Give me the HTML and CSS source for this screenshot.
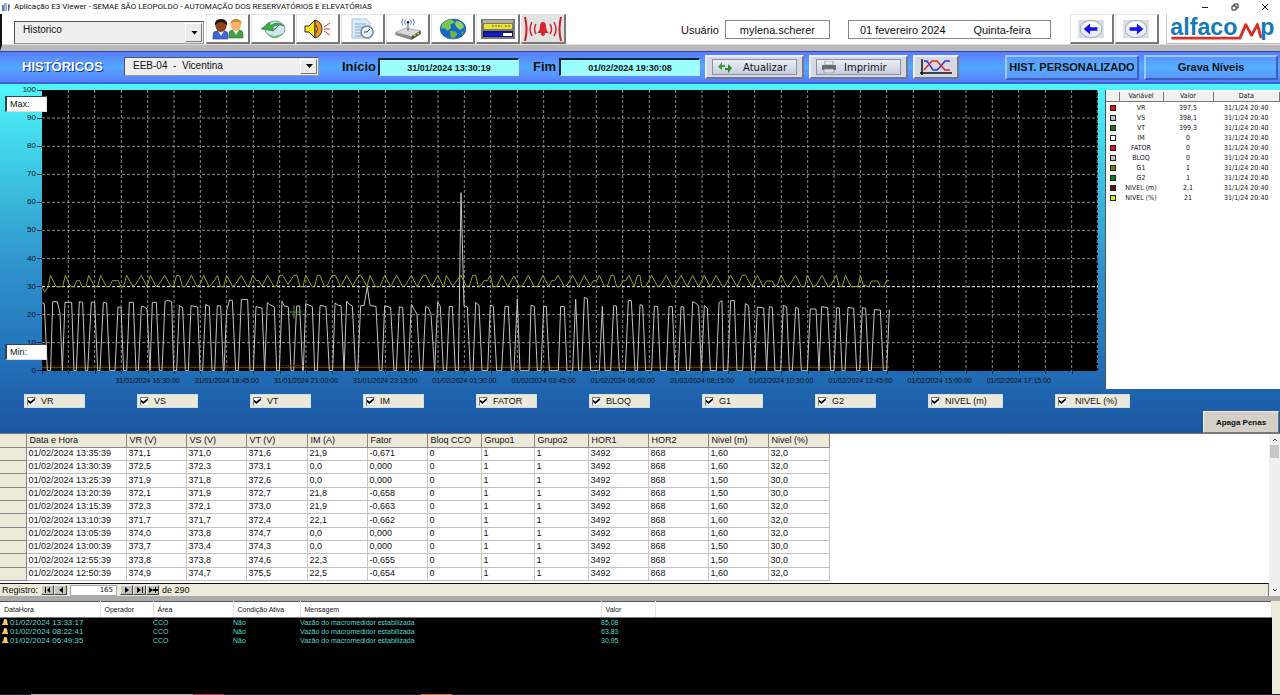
FILE: index.html
```html
<!DOCTYPE html>
<html lang="pt-BR">
<head>
<meta charset="utf-8">
<title>Aplicação E3 Viewer</title>
<link rel="stylesheet" href="styles.css">
</head>
<body>
<header class="titlebar">
  <svg class="app-icon" viewBox="0 0 10 10"><path d="M1 3h5v6H1z" fill="#5a7fb0"/><path d="M3 1h3v8H3z" fill="#9bb6d8"/><path d="M7 2l2 1-1 6H7z" fill="#3f6aa5"/></svg>
  <h1 class="title">Aplicação E3 Viewer - SEMAE SÃO LEOPOLDO - AUTOMAÇÃO DOS RESERVATÓRIOS E ELEVATÓRIAS</h1>
  <button class="win" aria-label="Minimizar"><svg viewBox="0 0 8 8"><path d="M1 4.500h6" /></svg></button>
  <button class="win" aria-label="Restaurar"><svg viewBox="0 0 8 8"><path d="M1 3h4v4H1zM3 3V1h4v4H5"/></svg></button>
  <button class="win" aria-label="Fechar"><svg viewBox="0 0 8 8"><path d="M1 1l6 6M7 1L1 7"/></svg></button>
</header>

<nav class="toolbar">
  <div class="drop screen-drop"><select aria-label="Tela"><option>Historico</option></select></div>
  <div class="tools">
    <button class="tool" aria-label="Usuários"><svg viewBox="0 0 32 22"><path d="M17 20v-4q0-4 4-4h6q4 0 4 4v4z" fill="#43a047" stroke="#1e6b25" stroke-width=".6"/><path d="M21 12l3 5 3-5z" fill="#e8f5e9"/><ellipse cx="24" cy="7" rx="5" ry="6" fill="#f6b26b"/><path d="M18.500 7Q18 1 24 1q6 0 5.500 6Q28 3 24 4q-4-1-5.500 3z" fill="#c98a2b"/><path d="M1 21v-4q0-4 4-4h7q4 0 4 4v4z" fill="#3f66d8" stroke="#223c9c" stroke-width=".6"/><path d="M6 13l3 5 3-5z" fill="#e3ebff"/><ellipse cx="9" cy="8" rx="5.500" ry="6" fill="#8a4418"/><path d="M3 8q-1-7 6-7 7 0 6 7-2-4-6-4-4 0-6 4z" fill="#1d120c"/></svg></button>
    <button class="tool" aria-label="Históricos"><svg viewBox="0 0 32 22"><ellipse cx="18" cy="11" rx="10" ry="8" fill="#d3e6ee" stroke="#7fa0a8"/><path d="M18 11l5-5M18 11h-4" stroke="#456" fill="none"/><path d="M4 11l9-7v4q7-6 14 0-7-3-12 2l2 3z" fill="#3fae49" stroke="#237a2d" stroke-width=".6"/><path d="M10 15q7 6 16 0-4 6-9 5-5 0-7-5z" fill="#63bf68"/></svg></button>
    <button class="tool" aria-label="Sirene"><svg viewBox="0 0 32 22"><path d="M3 8h4l6-6v18l-6-6H3z" fill="#ffe21a" stroke="#222" stroke-width="1"/><path d="M13 2q7 2 7 9t-7 9z" fill="#f39a1f" stroke="#333"/><path d="M14 7q3 4 0 8" stroke="#333" fill="#ffd54a"/><path d="M22 9l6-4M22 11h6M22 13l6 4" stroke="#d33" fill="none"/></svg></button>
    <button class="tool" aria-label="Relatórios"><svg viewBox="0 0 32 22"><path d="M5 1h14l4 4v15H5z" fill="#dcebf8" stroke="#a5c3dd"/><path d="M8 6h11M8 9h11M8 12h7M8 15h6M8 18h6" stroke="#7ba9d0"/><circle cx="20" cy="14" r="6" fill="#e8f0f5" stroke="#6d8797" stroke-width="1.500"/><path d="M20 14l3-3M20 14h-3" stroke="#345"/></svg></button>
    <button class="tool" aria-label="Comunicação"><svg viewBox="0 0 32 26"><path d="M1 17l12-5 18 3-11 7z" fill="#d9d9d9" stroke="#777" stroke-width=".6"/><path d="M1 17v3l19 6v-4z" fill="#888"/><path d="M20 22l11-7v4l-11 7z" fill="#444"/><path d="M23 21l2-1M27 19l2-1" stroke="#f3d22a" stroke-width="2"/><path d="M16 15V6" stroke="#222"/><circle cx="16" cy="5" r="1.500" fill="#222"/><path d="M13 2q-2 3 0 6M19 2q2 3 0 6M10 1q-3 4 0 8M22 1q3 4 0 8" stroke="#4a58d0" fill="none"/></svg></button>
    <button class="tool" aria-label="Rede"><svg viewBox="0 0 32 24"><ellipse cx="16" cy="12" rx="14" ry="11" fill="#1767c9" stroke="#0f4690" stroke-width=".6"/><path d="M4 7Q8 1 15 2l3 3-5 2 1 4-4 3-3-3-4 1z" fill="#7cc94c"/><path d="M20 3q7 1 8 7l-4 3-4-3-2-4z" fill="#8ed35b"/><path d="M13 14l6 1 2 3-5 5q-4-3-3-9z" fill="#67b83d"/><path d="M25 16l3-2-2 5z" fill="#67b83d"/></svg></button>
    <button class="tool panel" aria-label="Painel"><svg viewBox="0 0 34 20"><path d="M0 0h34v20H0z" fill="#7a7a72"/><path d="M2 1h30v3H2z" fill="#b1b1a8"/><path d="M3 5h28v5H3z" fill="#ece42c"/><path d="M11 7h10M24 7h6" stroke="#665" stroke-dasharray="2 1"/><path d="M2 12h30v6H2z" fill="#161678"/><path d="M22 14h9v3h-9z" fill="#fff"/><path d="M4 14h17v3H4z" fill="#1420d8"/></svg></button>
    <button class="tool alarm" aria-label="Alarmes"><svg viewBox="0 0 38 24"><path d="M1 0q3 12 0 24M37 0q-3 12 0 24" stroke="#c91f25" stroke-width="2" fill="none"/><path d="M8 5q-4 7 0 14M12 7q-3 5 0 10M30 5q4 7 0 14M26 7q3 5 0 10" stroke="#cf2a2f" stroke-width="1.500" fill="none"/><path d="M13 16q3-2 3-7 0-4 3-4t3 4q0 5 3 7z" fill="#d8262c"/><circle cx="19" cy="17" r="2" fill="#d8262c"/></svg></button>
  </div>
  <label class="user-label" for="user">Usuário</label>
  <input class="field user" id="user" value="mylena.scherer" readonly>
  <div class="field today"><span>01 fevereiro 2024</span><span>Quinta-feira</span></div>
  <div class="tools steps">
    <button class="tool" aria-label="Anterior"><svg viewBox="0 0 28 22"><path d="M0 1h28v20H0z" fill="#d9dde3"/><ellipse cx="14" cy="11" rx="12" ry="9.500" fill="#e9eff8" stroke="#9aa6b5"/><ellipse cx="14" cy="7" rx="8" ry="4" fill="#fff"/><path d="M6 11l7-6v4h8v4h-8v4z" fill="#1212ee"/></svg></button>
    <button class="tool" aria-label="Próximo"><svg viewBox="0 0 28 22"><path d="M0 1h28v20H0z" fill="#d9dde3"/><ellipse cx="14" cy="11" rx="12" ry="9.500" fill="#e9eff8" stroke="#9aa6b5"/><ellipse cx="14" cy="7" rx="8" ry="4" fill="#fff"/><path d="M22 11l-7-6v4H7v4h8v4z" fill="#1212ee"/></svg></button>
  </div>
  <div class="logo"><svg viewBox="0 0 112 30" aria-label="alfacomp"><path d="M2 25h71l6-14 6 11 6-11 4 14" class="logo-m"/><text x="1" y="22" class="logo-text">alfaco</text><text x="94" y="22" class="logo-text">p</text></svg></div>
</nav>

<section class="filterbar">
  <h2 class="heading">HISTÓRICOS</h2>
  <div class="drop station"><select aria-label="Estação"><option>EEB-04&nbsp; -&nbsp; Vicentina</option></select></div>
  <label class="range" for="start">Início</label><input class="when" id="start" value="31/01/2024 13:30:19">
  <label class="range end" for="end">Fim</label><input class="when" id="end" value="01/02/2024 19:30:08">
  <button class="bevel action"><span><svg viewBox="0 0 16 12"><path d="M1 6l4-5v3h3v2H5v3z" fill="#3d9b35"/><path d="M15 7l-4 5V9H8V7h3V3z" fill="#2f8428"/></svg>Atualizar</span></button>
  <button class="bevel action"><span><svg viewBox="0 0 16 12"><path d="M4 0h8v4H4z" fill="#eee" stroke="#777" stroke-width=".6"/><path d="M1 4h14v5H1z" fill="#666c75"/><path d="M3 8h10v4H3z" fill="#ddd" stroke="#777" stroke-width=".6"/></svg>Imprimir</span></button>
  <button class="bevel pens" aria-label="Gráfico"><svg viewBox="0 0 32 18"><path d="M2 1v16M0 15h32" stroke="#111" fill="none" stroke-width="1.500"/><path d="M4 3h3l6 9h4l4-4 4-5h5" stroke="#2738d8" fill="none" stroke-width="1.500"/><path d="M4 12l8-9h5l8 9h5" stroke="#e02a2a" fill="none" stroke-width="1.500"/></svg></button>
  <button class="glass first">HIST. PERSONALIZADO</button>
  <button class="glass">Grava Níveis</button>
</section>

<main class="trend">
  <div class="trend-row">
    <ul class="y-axis"><li>100</li><li>90</li><li>80</li><li>70</li><li>60</li><li>50</li><li>40</li><li>30</li><li>20</li><li>10</li><li>0</li></ul>
    <div class="plot-col">
      <svg class="plot" viewBox="0 0 3168 843" preserveAspectRatio="none">
        <path class="grid" d="M0 84H3168M0 169H3168M0 253H3168M0 337H3168M0 421H3168M0 506H3168M0 674H3168M0 758H3168"/>
        <path class="grid" d="M79 0v843M158 0v843M238 0v843M317 0v843M396 0v843M475 0v843M554 0v843M634 0v843M713 0v843M792 0v843M871 0v843M950 0v843M1030 0v843M1109 0v843M1188 0v843M1267 0v843M1346 0v843M1426 0v843M1505 0v843M1584 0v843M1663 0v843M1742 0v843M1822 0v843M1901 0v843M1980 0v843M2059 0v843M2138 0v843M2218 0v843M2297 0v843M2376 0v843M2455 0v843M2534 0v843M2614 0v843M2693 0v843M2772 0v843M2851 0v843M2930 0v843M3010 0v843M3089 0v843M3166 0v843"/>
        <path class="grid strong" d="M0 590H3168"/>
        <path class="pen maroon" d="M0 828H2542"/>
        <path class="pen olive" d="M0 833H2542"/>
        <g transform="translate(-126 -29)">
          <polyline class="pen current" points="126,667 133,670 142,871 152,871 158,664 172,664 180,700 187,871 195,666 215,666 222,871 229,871 238,664 248,666 256,871 263,871 274,665 284,666 293,871 300,871 310,666 320,668 329,871 345,871 354,680 363,681 371,871 380,871 388,666 400,666 408,871 415,871 424,678 433,680 441,686 450,871 457,666 469,666 478,871 486,871 495,663 506,660 515,664 521,871 530,871 538,676 548,682 556,871 565,871 573,676 593,680 600,871 608,871 617,673 628,678 636,871 644,871 652,676 662,677 670,871 672,871 680,690 689,659 697,660 707,871 715,871 724,657 743,658 750,871 760,871 768,679 786,683 794,871 802,667 808,672 823,680 830,871 838,871 846,662 852,676 865,680 873,871 881,871 890,677 899,677 908,871 910,871 917,670 937,679 944,871 952,871 960,676"/>
          <polyline class="pen level" points="126,619 134,635 145,619 151,585 168,619 188,619 196,585 207,610 212,619 222,619 230,601 239,601 246,619 258,619 266,585 284,619 293,619 302,585 319,619 328,619 337,601 355,601 363,619 371,619 380,585 398,617 407,612 424,585 441,619 451,585 468,619 477,612 494,585 513,619 521,617 530,585 539,587 547,619 556,619 574,585 591,619 600,612 611,585 627,619 635,612 653,585 661,619 671,619 680,585 698,619 706,612 724,585 742,619 750,610 758,585 768,600 777,601 786,617 803,585 822,619 830,617 838,585 848,585 864,612 882,585 891,585 900,619 909,619 917,585 936,619 944,617 952,585 960,585"/>
          <path class="pen cross" d="M862 695h42M882 675v40"/>
          <path class="pen mark" d="M862 856h48"/>
        </g>
        <g transform="translate(834 241)">
          <polyline class="pen current" points="0,405 18,409 28,601 38,601 45,398 55,405 63,406 72,601 80,392 88,402 97,407 107,601 113,601 122,406 132,406 142,349 150,406 168,408 178,601 186,601 194,406 212,412 222,601 229,601 238,409 248,412 257,601 265,601 274,402 291,432 300,601 308,601 317,409 325,412 333,432 344,601 353,396 361,408 370,601 380,601 388,408 397,409 406,601 415,601 423,67 432,406 442,410 451,601 459,601 467,397 477,405 486,601 503,601 511,404 520,408 530,601 545,601 555,408 565,408 574,601 582,601 592,386 600,601 627,601 633,405 643,408 652,601 663,601 671,408 679,408 688,601 715,601 722,408 733,409 741,601 758,601 767,386 776,601 785,601 793,381 802,385 812,601 838,601 847,408 855,601 872,601 881,406 889,407 898,601 916,601 925,390 934,391 945,601 952,601 960,403"/>
          <polyline class="pen level" points="0,315 14,349 22,345 36,315 46,315 62,349 80,315 98,347 116,315 123,315 141,349 150,315 166,349 180,349 194,315 212,349 230,315 248,349 256,345 274,315 291,349 309,315 318,315 335,349 353,315 371,349 379,315 398,347 423,315 440,349 449,345 458,315 467,315 475,349 484,345 492,331 502,331 511,315 519,349 530,349 546,315 563,349 582,317 599,349 608,345 625,315 643,349 652,349 669,315 686,349 695,331 704,331 714,315 733,349 741,345 758,315 776,349 793,315 811,347 820,331 829,331 838,315 854,349 863,345 873,315 881,315 890,349 900,349 908,331 917,331 927,315 943,349 952,315 960,315"/>
        </g>
        <g transform="translate(1794 511)">
          <polyline class="pen current" points="0,133 8,136 17,331 35,331 43,138 53,138 61,331 79,331 87,139 97,139 105,331 115,331 123,139 131,140 140,331 149,331 158,124 167,128 176,137 184,331 193,136 202,143 211,331 229,331 237,127 246,121 250,331 263,331 272,121 283,121 291,331 308,331 316,130 326,136 335,331 344,331 352,140 371,143 380,331 388,139 397,141 405,331 422,331 430,135 440,140 448,331 457,331 467,141 475,144 484,331 502,331 511,146 528,146 537,331 545,139 563,142 572,331 582,331 590,142 598,143 606,331 615,331 624,141 641,144 650,331 659,331 667,142 677,144 686,331 694,331 703,148 721,149 730,331 740,331 748,148"/>
          <polyline class="pen level" points="0,45 5,79 17,79 35,45 53,79 61,76 79,45 97,79 105,76 123,45 141,79 158,45 176,79 193,45 211,79 228,45 248,79 255,76 272,45 291,79 307,45 317,45 335,79 352,45 370,79 379,62 397,62 406,79 414,70 423,45 441,79 450,72 467,45 484,79 494,79 502,45 520,79 528,76 546,45 564,79 572,76 589,45 598,79 607,79 616,45 633,79 654,79 661,45 670,75 686,79 695,62 713,62 722,79 731,79 740,61 748,61"/>
        </g>
      </svg>
      <div class="ticks"></div>
      <ol class="x-axis"><li>31/01/2024 16:30:00</li><li>31/01/2024 18:45:00</li><li>31/01/2024 21:00:00</li><li>31/01/2024 23:15:00</li><li>01/02/2024 01:30:00</li><li>01/02/2024 03:45:00</li><li>01/02/2024 06:00:00</li><li>01/02/2024 08:15:00</li><li>01/02/2024 10:30:00</li><li>01/02/2024 12:45:00</li><li>01/02/2024 15:00:00</li><li>01/02/2024 17:15:00</li></ol>
    </div>
    <input class="limit max" value="Max:" aria-label="Máximo">
    <input class="limit min" value="Min:" aria-label="Mínimo">
    <div class="legend">
      <table>
        <thead><tr><th class="c-pen"></th><th class="c-var">Variável</th><th class="c-val">Valor</th><th>Data</th></tr></thead>
        <tbody>
          <tr><td><i class="sw red"></i></td><td>VR</td><td>397,5</td><td>31/1/24 20:40</td></tr>
          <tr><td><i class="sw silver"></i></td><td>VS</td><td>398,1</td><td>31/1/24 20:40</td></tr>
          <tr><td><i class="sw green"></i></td><td>VT</td><td>399,3</td><td>31/1/24 20:40</td></tr>
          <tr><td><i class="sw white"></i></td><td>IM</td><td>0</td><td>31/1/24 20:40</td></tr>
          <tr><td><i class="sw red"></i></td><td>FATOR</td><td>0</td><td>31/1/24 20:40</td></tr>
          <tr><td><i class="sw silver"></i></td><td>BLOQ</td><td>0</td><td>31/1/24 20:40</td></tr>
          <tr><td><i class="sw olive"></i></td><td>G1</td><td>1</td><td>31/1/24 20:40</td></tr>
          <tr><td><i class="sw green"></i></td><td>G2</td><td>1</td><td>31/1/24 20:40</td></tr>
          <tr><td><i class="sw maroon"></i></td><td>NIVEL (m)</td><td>2,1</td><td>31/1/24 20:40</td></tr>
          <tr><td><i class="sw lime"></i></td><td>NIVEL (%)</td><td>21</td><td>31/1/24 20:40</td></tr>
        </tbody>
      </table>
    </div>
  </div>
  <div class="checks">
    <label><input type="checkbox" checked>VR</label>
    <label><input type="checkbox" checked>VS</label>
    <label><input type="checkbox" checked>VT</label>
    <label><input type="checkbox" checked>IM</label>
    <label><input type="checkbox" checked>FATOR</label>
    <label><input type="checkbox" checked>BLOQ</label>
    <label><input type="checkbox" checked>G1</label>
    <label><input type="checkbox" checked>G2</label>
    <label class="wide"><input type="checkbox" checked>NIVEL (m)</label>
    <label class="wide last"><input type="checkbox" checked>NIVEL (%)</label>
  </div>
  <button class="clear">Apaga Penas</button>
</main>

<section class="records">
  <div class="records-main">
    <div class="sheet">
      <table>
        <colgroup><col class="w-sel"><col class="w-date"><col class="w-60"><col class="w-60"><col class="w-61"><col class="w-60"><col class="w-60"><col class="w-54"><col class="w-53"><col class="w-54"><col class="w-60"><col class="w-60"><col class="w-60"><col class="w-61"></colgroup>
        <thead><tr><th></th><th>Data e Hora</th><th>VR (V)</th><th>VS (V)</th><th>VT (V)</th><th>IM (A)</th><th>Fator</th><th>Bloq CCO</th><th>Grupo1</th><th>Grupo2</th><th>HOR1</th><th>HOR2</th><th>Nivel (m)</th><th>Nivel (%)</th></tr></thead>
        <tbody>
          <tr><th></th><td>01/02/2024 13:35:39</td><td>371,1</td><td>371,0</td><td>371,6</td><td>21,9</td><td>-0,671</td><td>0</td><td>1</td><td>1</td><td>3492</td><td>868</td><td>1,60</td><td>32,0</td></tr>
          <tr><th></th><td>01/02/2024 13:30:39</td><td>372,5</td><td>372,3</td><td>373,1</td><td>0,0</td><td>0,000</td><td>0</td><td>1</td><td>1</td><td>3492</td><td>868</td><td>1,60</td><td>32,0</td></tr>
          <tr><th></th><td>01/02/2024 13:25:39</td><td>371,9</td><td>371,8</td><td>372,6</td><td>0,0</td><td>0,000</td><td>0</td><td>1</td><td>1</td><td>3492</td><td>868</td><td>1,50</td><td>30,0</td></tr>
          <tr><th></th><td>01/02/2024 13:20:39</td><td>372,1</td><td>371,9</td><td>372,7</td><td>21,8</td><td>-0,658</td><td>0</td><td>1</td><td>1</td><td>3492</td><td>868</td><td>1,50</td><td>30,0</td></tr>
          <tr><th></th><td>01/02/2024 13:15:39</td><td>372,3</td><td>372,1</td><td>373,0</td><td>21,9</td><td>-0,663</td><td>0</td><td>1</td><td>1</td><td>3492</td><td>868</td><td>1,60</td><td>32,0</td></tr>
          <tr><th></th><td>01/02/2024 13:10:39</td><td>371,7</td><td>371,7</td><td>372,4</td><td>22,1</td><td>-0,662</td><td>0</td><td>1</td><td>1</td><td>3492</td><td>868</td><td>1,60</td><td>32,0</td></tr>
          <tr><th></th><td>01/02/2024 13:05:39</td><td>374,0</td><td>373,8</td><td>374,7</td><td>0,0</td><td>0,000</td><td>0</td><td>1</td><td>1</td><td>3492</td><td>868</td><td>1,60</td><td>32,0</td></tr>
          <tr><th></th><td>01/02/2024 13:00:39</td><td>373,7</td><td>373,4</td><td>374,3</td><td>0,0</td><td>0,000</td><td>0</td><td>1</td><td>1</td><td>3492</td><td>868</td><td>1,50</td><td>30,0</td></tr>
          <tr><th></th><td>01/02/2024 12:55:39</td><td>373,8</td><td>373,8</td><td>374,6</td><td>22,3</td><td>-0,655</td><td>0</td><td>1</td><td>1</td><td>3492</td><td>868</td><td>1,50</td><td>30,0</td></tr>
          <tr><th></th><td>01/02/2024 12:50:39</td><td>374,9</td><td>374,7</td><td>375,5</td><td>22,5</td><td>-0,654</td><td>0</td><td>1</td><td>1</td><td>3492</td><td>868</td><td>1,60</td><td>32,0</td></tr>
        </tbody>
      </table>
    </div>
    <div class="pager">
      <label for="rec">Registro:</label>
      <div class="pager-buttons">
        <button aria-label="Primeiro"><svg viewBox="0 0 10 6"><path d="M2 0h1v6H2zM7 0v6L4 3z"/></svg></button>
        <button aria-label="Anterior"><svg viewBox="0 0 10 6"><path d="M7 0v6L3 3z"/></svg></button>
      </div>
      <input id="rec" value="165">
      <div class="pager-buttons">
        <button aria-label="Próximo"><svg viewBox="0 0 10 6"><path d="M3 0v6l4-3z"/></svg></button>
        <button aria-label="Último"><svg viewBox="0 0 10 6"><path d="M2 0v6l4-3zM7 0h1v6H7z"/></svg></button>
        <button aria-label="Novo"><svg viewBox="0 0 10 6"><path d="M1 0v6l4-3zM5 2h5v2H5zM7 0h1v6H7z"/></svg></button>
      </div>
      <span>de 290</span>
    </div>
  </div>
  <div class="scroll"><svg viewBox="0 0 6 4"><path d="M1 3l2-2 2 2"/></svg><i></i><svg viewBox="0 0 6 4"><path d="M1 1l2 2 2-2"/></svg></div>
</section>

<section class="alarms">
  <table>
    <colgroup><col class="a-date"><col class="a-op"><col class="a-area"><col class="a-cond"><col class="a-msg"><col class="a-val"><col></colgroup>
    <thead><tr><th>DataHora</th><th>Operador</th><th>Área</th><th>Condição Ativa</th><th>Mensagem</th><th>Valor</th><th></th></tr></thead>
    <tbody>
      <tr><td><svg class="bell" viewBox="0 0 9 9"><path d="M1 7q2-1 2-4 0-2 2-2t2 2q0 3 1 4v1H1z" fill="#f0c64a"/><path d="M4 2q1-1 1 0v4H4z" fill="#fff3b8"/></svg>01/02/2024 13:33:17</td><td></td><td>CCO</td><td>Não</td><td>Vazão do macromedidor estabilizada</td><td>85,08</td><td></td></tr>
      <tr><td><svg class="bell" viewBox="0 0 9 9"><path d="M1 7q2-1 2-4 0-2 2-2t2 2q0 3 1 4v1H1z" fill="#f0c64a"/><path d="M4 2q1-1 1 0v4H4z" fill="#fff3b8"/></svg>01/02/2024 08:22:41</td><td></td><td>CCO</td><td>Não</td><td>Vazão do macromedidor estabilizada</td><td>63,83</td><td></td></tr>
      <tr><td><svg class="bell" viewBox="0 0 9 9"><path d="M1 7q2-1 2-4 0-2 2-2t2 2q0 3 1 4v1H1z" fill="#f0c64a"/><path d="M4 2q1-1 1 0v4H4z" fill="#fff3b8"/></svg>01/02/2024 06:49:35</td><td></td><td>CCO</td><td>Não</td><td>Vazão do macromedidor estabilizada</td><td>30,95</td><td></td></tr>
    </tbody>
  </table>
</section>
<footer class="taskbar"></footer>
</body>
</html>
```

FILE: styles.css
```css
* { box-sizing: border-box; }
body { margin: 0; min-height: 100vh; display: flex; flex-direction: column; background: #fff; color: #111; font-family: "Liberation Sans", Arial, sans-serif; font-size: 9px; overflow-x: hidden; }
button, input, select { font: inherit; color: inherit; margin: 0; padding: 0; border-radius: 0; }
ul, ol, h1, h2 { margin: 0; padding: 0; list-style: none; }
svg { display: block; }
table { border-collapse: collapse; table-layout: fixed; }
th, td { padding: 0; font-weight: normal; text-align: left; white-space: nowrap; }

.titlebar { display: flex; align-items: center; height: 14px; }
.app-icon { width: 10px; height: 10px; margin: 0 3px 0 1px; }
.title { flex: 1; font: 8px/12px Roboto, sans-serif; }
.win { width: 30px; height: 12px; border: 0; background: none; display: grid; place-items: center; }
.win svg { width: 8px; height: 8px; fill: none; stroke: #222; stroke-width: 1; }

.toolbar { display: flex; align-items: flex-start; height: 37px; border-left: 2px solid #111; border-bottom: 6px solid #b9b9b9; box-shadow: inset 0 -1px #ddd; }
.drop { position: relative; background: #efefef; border: 1px solid #555; border-right-color: #999; border-bottom-color: #999; }
.drop select { width: 100%; height: 100%; border: 0; background: none; appearance: none; font-size: 10px; display: block; }
.drop::after { content: ""; position: absolute; right: 1px; top: 1px; bottom: 1px; width: 15px; background: #ececec; border: 1px solid #fff; border-right-color: #777; border-bottom-color: #777; pointer-events: none; }
.drop::before { content: ""; position: absolute; z-index: 1; right: 5px; top: 0; bottom: 0; width: 7px; height: 4px; margin: auto 0; background: #000; clip-path: polygon(0 0, 100% 0, 50% 100%); pointer-events: none; }
.screen-drop { width: 190px; height: 23px; margin: 7px 2px 0 12px; }
.screen-drop select { padding: 0 0 6px 8px; }
.tools { display: flex; gap: 1px; }
.tool { width: 44px; height: 30px; border: 1px solid #e4e4e4; border-right: 2px solid #777; border-bottom: 2px solid #777; background: #fff; display: grid; place-items: center; }
.tool svg { width: 32px; height: 22px; }
.tool.panel svg { width: 34px; height: 20px; }
.tool.alarm { width: 45px; background: #e3e3e3; }
.tool.alarm svg { width: 38px; height: 24px; }
.user-label { margin: 9px 6px 0 115px; font-size: 11px; line-height: 14px; }
.field { border: 1px solid #888; height: 19px; margin-top: 6px; background: #fff; font-size: 11px; }
.user { width: 105px; text-align: center; }
.today { width: 203px; margin-left: 18px; display: flex; justify-content: space-between; align-items: center; padding: 0 19px 0 11px; }
.steps { margin-left: 19px; }
.steps svg { width: 26px; height: 20px; }
.logo { flex: 1; min-width: 0; margin-left: 7px; height: 30px; border-left: 1px solid #ccc; border-bottom: 1px solid #bbb; }
.logo svg { width: 100%; height: 29px; }
.logo-text { font: bold 24px "Liberation Sans", Arial, sans-serif; fill: #1479ba; }
.logo-m { fill: none; stroke: #d5312b; stroke-width: 3; stroke-linejoin: round; }

.filterbar { display: flex; align-items: center; height: 33px; border-top: 1px solid #35449a; border-bottom: 2px solid #3f62d8; background: linear-gradient(#5a7cff, #52a8ff 50%, #5780ff); padding-right: 2px; }
.heading { width: 124px; padding-left: 22px; font-size: 13px; line-height: 16px; color: #fff; text-shadow: 1px 1px #1c2f9c; }
.station { width: 195px; height: 19px; margin-bottom: 2px; }
.station select { padding: 0 0 2px 8px; }
.range { font-size: 13px; font-weight: bold; width: 36px; margin-left: 23px; line-height: 16px; }
.range.end { width: 26px; margin-left: 14px; }
.when { width: 141px; height: 18px; background: #9ff; border: 1px solid #cde; border-left: 2px solid #123; border-top: 2px solid #123; text-align: center; font-weight: bold; font-size: 9px; }
.bevel { height: 24px; background: #d6d9e2; border: 2px solid #eef; border-right-color: #778; border-bottom-color: #778; margin-left: 5px; display: grid; place-items: center; }
.action { width: 99px; padding: 0 5px; }
.action span { display: flex; align-items: center; gap: 10px; width: 100%; height: 16px; padding-left: 4px; border: 1px solid #8a92a8; background: linear-gradient(#eceef8, #c9cddd); font: 10px "DejaVu Sans", sans-serif; }
.action svg { width: 16px; height: 12px; }
.action + .action span { gap: 7px; }
.pens { width: 46px; }
.pens svg { width: 32px; height: 18px; }
.glass { flex: 0 1 134px; height: 25px; margin-left: 5px; white-space: nowrap; font-size: 11px; font-weight: bold; background: linear-gradient(#5b95ff, #55b0ff 50%, #5b95ff); border: 2px solid #9cc8ff; border-right-color: #3c62b8; border-bottom-color: #3c62b8; }
.glass.first { margin-left: auto; }

.trend { display: flex; flex-direction: column; background: linear-gradient(#50f6fb, #3fcde6 22%, #2f93cc 52%, #2170b8 80%, #1b559f); padding-top: 6px; height: 349px; }
.trend-row { position: relative; display: flex; }
.y-axis { width: 42px; height: 289px; margin-top: -4px; display: flex; flex-direction: column; justify-content: space-between; font-size: 8px; line-height: 8px; }
.y-axis li { display: flex; align-items: center; justify-content: flex-end; gap: 1px; }
.y-axis li::after { content: ""; width: 5px; height: 1px; background: #123; }
.plot-col { flex: 1; min-width: 0; }
.plot { width: 100%; height: 281px; background: #000; }
.grid, .pen { fill: none; vector-effect: non-scaling-stroke; }
.pen { stroke-width: 1px; }
.grid { stroke: #8c8c8c; stroke-dasharray: 3 2; }
.grid.strong { stroke: #fff; }
.current { stroke: #c4c4c4; }
.level { stroke: #86a81c; }
.cross { stroke: #5f8f25; }
.mark { stroke: #7a1010; }
.pen.maroon { stroke: #5c1508; }
.pen.olive { stroke: #4c5a08; }
.ticks { height: 5px; background: repeating-linear-gradient(90deg, #0c2b52 0 1px, transparent 1px 2.5%) 0 0 / 100% 3px no-repeat; }
.x-axis { display: grid; grid-template-columns: repeat(12, 1fr); margin: 0 3.75% 0 6.25%; font-size: 7px; line-height: 10px; text-align: center; white-space: nowrap; }
.limit { position: absolute; left: 5px; width: 42px; height: 16px; padding-left: 3px; font-size: 9px; background: #fff; border: 1px solid #ddd; border-left: 2px solid #345; border-top-color: #345; }
.limit.max { top: 6px; }
.limit.min { top: 254px; }
.legend { width: 175px; height: 299px; margin-left: 7px; background: #fff; border-left: 1px solid #456; padding-top: 2px; }
.legend table { width: 100%; font: 7px/8px "DejaVu Sans Condensed", "DejaVu Sans", sans-serif; }
.legend th { height: 9px; text-align: center; background: #f0f0f0; border-right: 1px solid #777; border-bottom: 1px solid #777; }
.legend td { height: 10px; text-align: center; }
.legend tbody::before { content: ""; display: block; height: 1px; }
.c-pen { width: 13px; } .c-var { width: 44px; } .c-val { width: 50px; }
.sw { display: block; width: 6px; height: 6px; margin: 0 auto; border: 1px solid #222; }
.sw.red { background: #e81010; } .sw.silver { background: #c0c0c0; } .sw.green { background: #087d10; } .sw.white { background: #fff; } .sw.olive { background: #7d7d08; } .sw.maroon { background: #7d0808; } .sw.lime { background: #c0f020; }
.checks { display: grid; grid-template-columns: repeat(8, 113fr) 127fr 225fr; padding-left: 24px; margin-top: 5px; }
.checks label { width: 61px; height: 14px; display: flex; align-items: center; gap: 5px; padding-left: 2px; background: #ece9d8; border: 1px solid #cde; font-size: 9px; white-space: nowrap; }
.checks .wide { width: 75px; }
.checks .last { gap: 8px; }
.checks input { appearance: none; width: 9px; height: 9px; background: #fff; border: 1px solid #777; border-right-color: #ddd; border-bottom-color: #ddd; display: grid; place-items: center; }
.checks input:checked::before { content: ""; width: 7px; height: 6px; background: #000; clip-path: polygon(0 30%, 35% 60%, 100% 0, 100% 35%, 35% 100%, 0 65%); }
.clear { width: 76px; height: 22px; margin: 3px 1px 0 auto; background: #d4d0c8; border: 1px solid #eee; border-right-color: #777; border-bottom-color: #777; font-weight: bold; font-size: 8px; }

.records { display: flex; height: 168px; border-top: 1px solid #777; border-bottom: 5px solid #aaa; }
.records-main { flex: 1; min-width: 0; display: flex; flex-direction: column; }
.sheet { flex: 1; overflow: hidden; }
.sheet table { width: 829px; line-height: 11px; }
.sheet th { background: #ece9d8; border-right: 1px solid #888; border-bottom: 1px solid #888; padding-left: 3px; }
.sheet thead th { height: 13px; }
.sheet td { height: 13px; padding-left: 2px; border-right: 1px solid #c8c8c8; border-bottom: 1px solid #c0c0c0; }
.sheet tbody tr:nth-child(3n) td { height: 14px; }
.w-sel { width: 26px; } .w-date { width: 100px; } .w-60 { width: 60px; } .w-61 { width: 61px; } .w-54 { width: 54px; } .w-53 { width: 53px; }
.pager { display: flex; align-items: center; height: 13px; gap: 3px; padding-left: 2px; background: #ece9d8; border-top: 1px solid #111; border-right: 1px solid #777; }
.pager input { width: 47px; height: 11px; background: #fff; border: 1px solid #aaa; text-align: right; padding-right: 3px; font: 7px "DejaVu Sans", sans-serif; }
.pager-buttons { display: flex; }
.pager button { width: 13px; height: 10px; background: #c6c3bb; border: 1px solid #eee; border-right-color: #444; border-bottom-color: #444; display: grid; place-items: center; }
.pager svg { width: 10px; height: 6px; }
.scroll { width: 11px; background: #f0f0f0; display: flex; flex-direction: column; align-items: center; padding: 4px 0; }
.scroll svg { width: 6px; height: 4px; fill: none; stroke: #444; }
.scroll i { width: 9px; height: 13px; margin: 3px 0 auto; background: #c6c6c6; }

.alarms { flex: 1; background: #000; border-right: 8px solid #ece9d8; }
.alarms table { width: 100%; font-size: 7px; line-height: 9px; border-top: 1px solid #555; }
.alarms th { height: 16px; background: #fff; border-right: 1px solid #e4e4e4; padding-left: 4px; border-bottom: 1px solid #777; }
.alarms td { height: 9px; color: #52d6cc; }
.alarms td:first-child { font-size: 8px; }
.a-date { width: 100px; } .a-op { width: 53px; } .a-area { width: 80px; } .a-cond { width: 67px; } .a-msg { width: 301px; } .a-val { width: 54px; }
.bell { display: inline-block; width: 8px; height: 8px; margin: 0 1px; vertical-align: top; }
.taskbar { height: 1px; background: linear-gradient(90deg, #123 0 31px, #aaa 31px 193px, #d03060 193px 224px, #123 224px 421px, #c07020 421px 452px, #123 452px); }
```
